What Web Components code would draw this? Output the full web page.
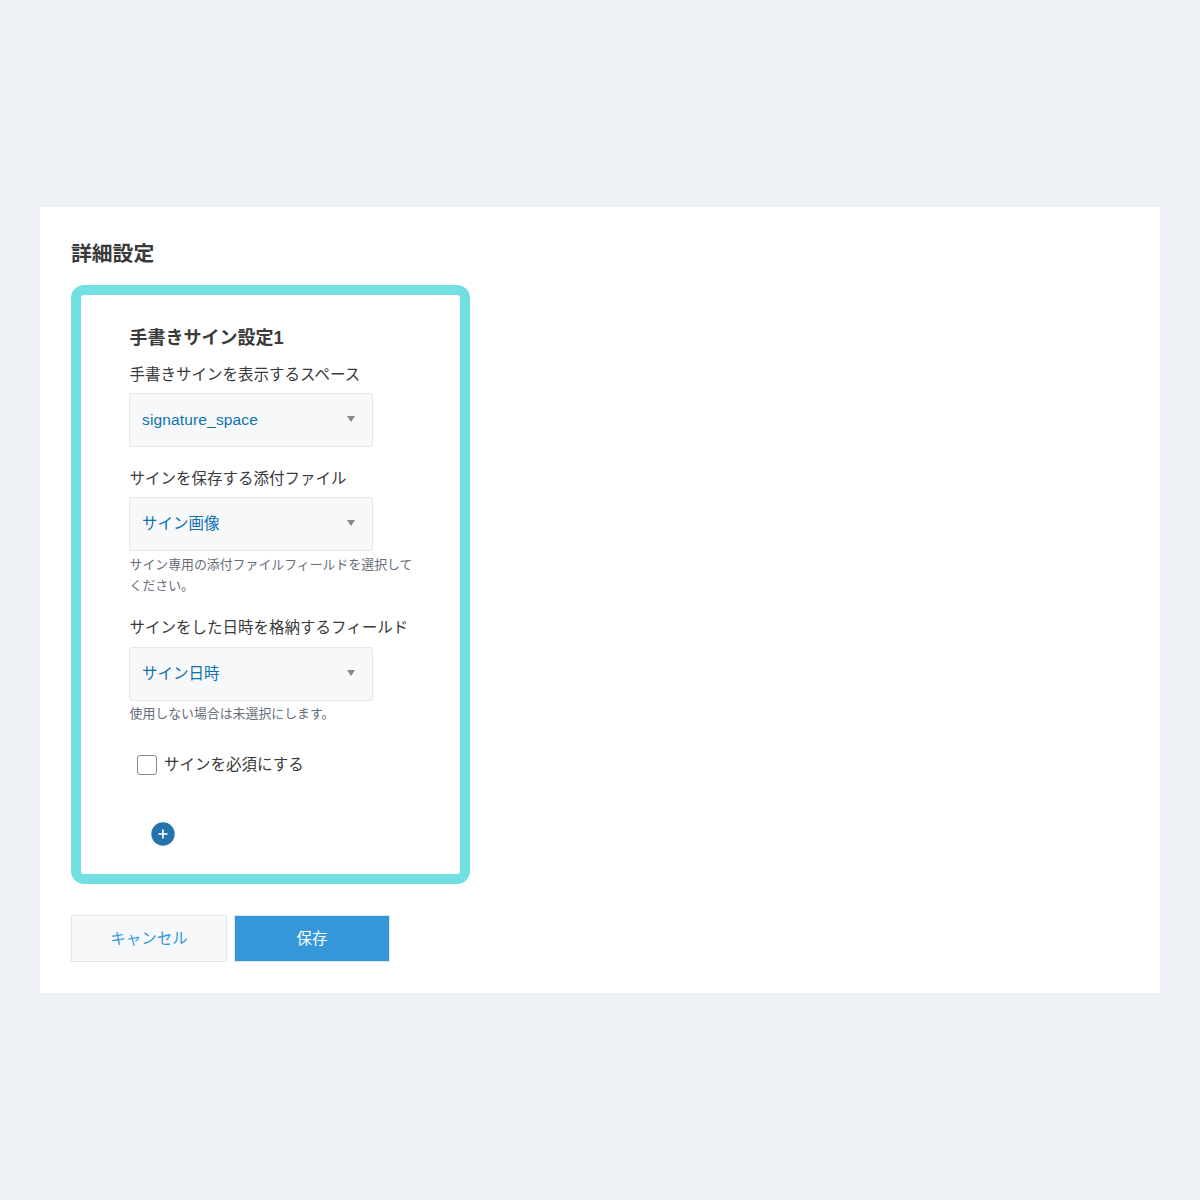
<!DOCTYPE html>
<html lang="ja">
<head>
<meta charset="utf-8">
<title>詳細設定</title>
<style>
    body{
        margin: 0;
        background-color: #edf1f6;
        font-family: "Liberation Sans", "Noto Sans CJK JP", sans-serif;
        color: #3a3a3a;
    }
</style>
</head>
<body>
<settings-page></settings-page>

<script>
class SettingsPage extends HTMLElement {
    constructor(){
        super();
        this.attachShadow({mode: 'open'}).innerHTML = `
            <style>
                :host{ display: block; width: 1200px; height: 1200px; padding: 207px 40px 0; box-sizing: border-box; }
                .Panel{ background-color: white; height: 786px; padding: 33px 31px 0; box-sizing: border-box; }
                h1{ margin: 0 0 17px; font-size: 20.8px; line-height: 28px; font-weight: 700; }
                .Buttons{ display: flex; gap: 7px; margin-top: 31px; }
            </style>
            <div class="Panel">
                <h1>詳細設定</h1>
                <signature-card></signature-card>
                <div class="Buttons">
                    <action-button>キャンセル</action-button>
                    <action-button primary>保存</action-button>
                </div>
            </div>
        `;
    }
}

class SignatureCard extends HTMLElement {
    constructor(){
        super();
        this.attachShadow({mode: 'open'}).innerHTML = `
            <style>
                :host{ display: block; width: 399px; height: 599px; box-sizing: border-box; border: 10px solid #72e0e2; border-radius: 13px; padding: 30px 47px 0 48.5px; }
                h2{ margin: 0 0 12px; font-size: 18px; line-height: 27px; font-weight: 700; }
                .Fields{ display: flex; flex-direction: column; }
                .Check{ margin-top: 29px; }
                .Add{ margin: 46px 0 0 21px; }
            </style>
            <h2>手書きサイン設定1</h2>
            <div class="Fields">
                <select-field style="--value-spacing:0.15px" label="手書きサインを表示するスペース" value="signature_space"></select-field>
                <select-field style="margin-top:21px" label="サインを保存する添付ファイル" value="サイン画像"
                    help="サイン専用の添付ファイルフィールドを選択してください。"></select-field>
                <select-field style="margin-top:21px; --box-gap:8px; --help-gap:3px" label="サインをした日時を格納するフィールド" value="サイン日時"
                    help="使用しない場合は未選択にします。"></select-field>
            </div>
            <check-field class="Check">サインを必須にする</check-field>
            <add-button class="Add"></add-button>
        `;
    }
}

class SelectField extends HTMLElement {
    connectedCallback(){
        const help = this.getAttribute("help");
        this.attachShadow({mode: 'open'}).innerHTML = `
            <style>
                :host{ display: block; }
                label{ display: block; font-size: 15.5px; line-height: 22px; }
                .Box{ display: flex; align-items: center; justify-content: space-between; width: 244px; height: 54px; margin: var(--box-gap, 7px) 0 0 -0.5px; padding: 0 17px 0 12px; box-sizing: border-box; background-color: #f6f8fa; border: 1px solid #e3e7e8; border-radius: 3px; color: #0f72ae; font-size: 15.5px; line-height: 22px; letter-spacing: var(--value-spacing, 0); }
                .Arrow{ width: 0; height: 0; border: 4px solid transparent; border-top: 6px solid #888; border-bottom: 0; margin-top: -3px; }
                .Help{ width: 290px; margin: var(--help-gap, 4px) 0 0 0; font-size: 12.9px; line-height: 20.5px; color: #666d7a; }
            </style>
            <label>${this.getAttribute("label")}</label>
            <div class="Box"><span>${this.getAttribute("value")}</span><span class="Arrow"></span></div>
            ${help ? `<div class="Help">${help}</div>` : ""}
        `;
    }
}

class CheckField extends HTMLElement {
    constructor(){
        super();
        this.attachShadow({mode: 'open'}).innerHTML = `
            <style>
                :host{ display: flex; align-items: center; gap: 7px; margin-left: 7.5px; font-size: 15.5px; line-height: 22px; }
                .Mark{ width: 20px; height: 20px; box-sizing: border-box; border: 1px solid #888; border-radius: 3px; background-color: white; }
            </style>
            <span class="Mark"></span><slot></slot>
        `;
    }
}

class AddButton extends HTMLElement {
    constructor(){
        super();
        this.attachShadow({mode: 'open'}).innerHTML = `
            <style>
                :host{ display: block; width: 24px; height: 24px; }
                svg{ display: block; }
            </style>
            <svg width="24" height="24" viewBox="0 0 24 24">
                <circle cx="12" cy="12" r="11.7" fill="#2474ab"/>
                <path d="M12 8v8M8 12h8" stroke="white" stroke-width="1.6" stroke-linecap="round"/>
            </svg>
        `;
    }
}

class ActionButton extends HTMLElement {
    constructor(){
        super();
        this.attachShadow({mode: 'open'}).innerHTML = `
            <style>
                :host{ display: flex; align-items: center; justify-content: center; width: 156px; height: 47px; box-sizing: border-box; background-color: #f6f8fa; border: 1px solid #e3e7e8; color: #3498db; font-size: 15.5px; line-height: 22px; }
                :host([primary]){ background-color: #3498db; color: white; }
            </style>
            <slot></slot>
        `;
    }
}

window.customElements.define("settings-page", SettingsPage);
window.customElements.define("signature-card", SignatureCard);
window.customElements.define("select-field", SelectField);
window.customElements.define("check-field", CheckField);
window.customElements.define("add-button", AddButton);
window.customElements.define("action-button", ActionButton);
</script>
</body>
</html>
